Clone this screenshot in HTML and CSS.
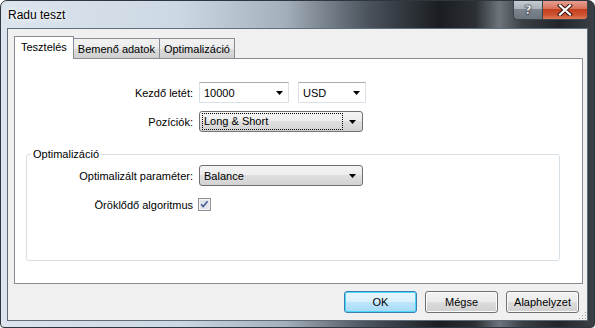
FILE: index.html
```html
<!DOCTYPE html>
<html lang="hu">
<head>
    <meta charset="UTF-8">
    <title>Radu teszt</title>
    <link rel="stylesheet" href="styles.css">
</head>
<body>
    <div class="window">
        <!-- Címsor -->
        <div class="titlebar">
            <span class="title">Radu teszt</span>
            <div class="caption-buttons">
                <div class="cap-btn help"><span>?</span></div>
                <div class="cap-btn close">
                    <svg width="16" height="12" viewBox="0 0 16 12">
                        <path d="M3 1.5 L13 10.5 M13 1.5 L3 10.5" stroke="#3b1b14" stroke-width="4.2" stroke-linecap="square"/>
                        <path d="M3 1.5 L13 10.5 M13 1.5 L3 10.5" stroke="#ffffff" stroke-width="2.2" stroke-linecap="square"/>
                    </svg>
                </div>
            </div>
        </div>

        <div class="client">
            <!-- Fülek -->
            <div class="tabs">
                <div class="tab active">Tesztelés</div>
                <div class="tab">Bemenő adatok</div>
                <div class="tab">Optimalizáció</div>
            </div>

            <div class="panel">
                <div class="form">
                    <label class="field-label">Kezdő letét:</label>
                    <div class="controls">
                        <div class="combo edit deposit">
                            <span>10000</span>
                            <svg class="arrow" width="7" height="4" viewBox="0 0 7 4"><polygon points="0,0 7,0 3.5,4" fill="#000"/></svg>
                        </div>
                        <div class="combo edit currency">
                            <span>USD</span>
                            <svg class="arrow" width="7" height="4" viewBox="0 0 7 4"><polygon points="0,0 7,0 3.5,4" fill="#000"/></svg>
                        </div>
                    </div>

                    <label class="field-label">Pozíciók:</label>
                    <div class="combo list">
                        <span class="focus">Long &amp; Short</span>
                        <svg class="arrow" width="7" height="4" viewBox="0 0 7 4"><polygon points="0,0 7,0 3.5,4" fill="#000"/></svg>
                    </div>
                </div>

                <fieldset class="group">
                    <legend>Optimalizáció</legend>
                    <div class="form group-form">
                        <label class="field-label">Optimalizált paraméter:</label>
                        <div class="combo list">
                            <span>Balance</span>
                            <svg class="arrow" width="7" height="4" viewBox="0 0 7 4"><polygon points="0,0 7,0 3.5,4" fill="#000"/></svg>
                        </div>

                        <label class="field-label">Öröklődő algoritmus</label>
                        <div class="checkbox">
                            <svg width="13" height="13" viewBox="0 0 13 13">
                                <rect x="0.5" y="0.5" width="12" height="12" fill="#f4f4f4" stroke="#8f8f8f"/>
                                <rect x="2" y="2" width="9" height="9" fill="#dfe4ec"/>
                                <path d="M3.2 6.4 L5.2 8.6 L9.6 3.2" fill="none" stroke="#4a5f97" stroke-width="1.6"/>
                            </svg>
                        </div>
                    </div>
                </fieldset>
            </div>

            <!-- Gombok -->
            <div class="buttons">
                <button class="btn default">OK</button>
                <button class="btn">Mégse</button>
                <button class="btn">Alaphelyzet</button>
            </div>

            <div class="grip">
                <svg width="9" height="9" viewBox="0 0 9 9">
                    <rect x="7" y="1" width="1" height="1" fill="#a0a0a0"/>
                    <rect x="4" y="4" width="1" height="1" fill="#a0a0a0"/>
                    <rect x="7" y="4" width="1" height="1" fill="#a0a0a0"/>
                    <rect x="1" y="7" width="1" height="1" fill="#a0a0a0"/>
                    <rect x="4" y="7" width="1" height="1" fill="#a0a0a0"/>
                    <rect x="7" y="7" width="1" height="1" fill="#a0a0a0"/>
                </svg>
            </div>
        </div>
    </div>
</body>
</html>
```

FILE: styles.css
```css
/* Alap beállítások */
* {
    margin: 0;
    padding: 0;
    box-sizing: border-box;
}

body {
    width: 595px;
    height: 328px;
    overflow: hidden;
    background: #ffffff;
    font-family: 'Liberation Sans', Arial, sans-serif;
    font-size: 11px;
    color: #000;
}

/* Ablakkeret (Aero) */
.window {
    width: 595px;
    height: 328px;
    border: 1px solid #30363d;
    border-radius: 7px 7px 4px 4px;
    background: linear-gradient(to right, #dce5ee 0%, #ccd8e4 30%, #a3afbb 48%, #4a525b 62%, #1a1d21 74%, #2c3035 80%, #6d747b 84%, #3a3f45 88%, #22262a 94%, #3b4046 100%);
    display: flex;
    flex-direction: column;
    overflow: hidden;
}

.titlebar {
    height: 27px;
    display: flex;
    align-items: flex-start;
    flex-shrink: 0;
}

.title {
    flex: 1;
    padding: 7px 0 0 7px;
    font-size: 12px;
    color: #000;
    text-shadow: 0 0 6px #ffffff, 0 0 3px #ffffff;
}

.caption-buttons {
    display: flex;
    margin-right: 6px;
    margin-top: -1px;
}

.cap-btn {
    height: 20px;
    display: flex;
    align-items: center;
    justify-content: center;
    border: 1px solid #3c434b;
    border-top: none;
}

.cap-btn.help {
    width: 29px;
    border-radius: 0 0 0 4px;
    border-right: none;
    background: linear-gradient(to bottom, #c9cfd6 0%, #aab2ba 45%, #7c858e 50%, #6d767f 100%);
}

.cap-btn.help span {
    font-family: 'DejaVu Sans', sans-serif;
    font-weight: bold;
    font-size: 13px;
    line-height: 13px;
    color: #ffffff;
    -webkit-text-stroke: 0.4px #2a2f35;
    text-shadow: 0 0 2px #2a2f35;
}

.cap-btn.close {
    width: 46px;
    border-radius: 0 0 4px 0;
    background: linear-gradient(to bottom, #e8a597 0%, #d9735e 45%, #c5401f 50%, #cf5432 80%, #e07d5a 100%);
}

/* Kliens terület */
.client {
    position: relative;
    height: 293px;
    margin: 0 6px;
    border: 1px solid #5f6c79;
    background: #f0f0f0;
    padding: 7px 0 0 0;
    display: flex;
    flex-direction: column;
}

.tabs {
    height: 22px;
    display: flex;
    align-items: flex-end;
    margin-left: 6px;
}

.tab {
    height: 20px;
    padding: 0 4px;
    display: flex;
    align-items: center;
    border: 1px solid #898c95;
    border-bottom: none;
    margin-left: -1px;
    background: linear-gradient(to bottom, #f2f2f2 0%, #ebebeb 50%, #dddddd 50%, #cfcfcf 100%);
}

.tab.active {
    height: 23px;
    margin-left: 0;
    margin-bottom: -1px;
    padding: 0 6px 2px 6px;
    background: #ffffff;
    position: relative;
    z-index: 1;
}

.panel {
    height: 226px;
    margin: 0 4px 0 6px;
    background: #ffffff;
    border: 1px solid #898c95;
    padding-top: 23px;
}

/* Űrlap rács */
.form {
    display: grid;
    grid-template-columns: 178px auto;
    column-gap: 6px;
    row-gap: 8px;
    align-items: center;
    justify-items: start;
}

.field-label {
    justify-self: end;
}

.controls {
    display: flex;
    gap: 9px;
}

.combo {
    height: 21px;
    display: flex;
    align-items: center;
    justify-content: space-between;
    padding: 0 5px 0 4px;
}

.combo.edit {
    background: #ffffff;
    border: 1px solid #dbdfe6;
    border-top-color: #abadb3;
}

.combo.deposit {
    width: 90px;
}

.combo.currency {
    width: 68px;
}

.combo.list {
    width: 164px;
    border: 1px solid #707070;
    border-radius: 3px;
    padding: 0 6px 0 2px;
    background: linear-gradient(to bottom, #f4f4f4 0%, #ececec 50%, #dfdfdf 50%, #d2d2d2 100%);
}

.combo.list span {
    padding-left: 2px;
}

.combo.list .focus {
    width: 141px;
    height: 17px;
    line-height: 15px;
    border: 1px dotted #000;
    padding-left: 1px;
    margin-top: -1px;
}

/* Csoportdoboz */
.group {
    height: 113px;
    margin: 16px 22px 0 11px;
    border: 1px solid #d5dfe5;
    border-radius: 3px;
    padding: 4px 0 0 0;
}

.group legend {
    margin-left: 4px;
    padding: 0 2px;
    line-height: 13px;
}

.group-form {
    grid-template-columns: 166px auto;
    row-gap: 12px;
}

.checkbox {
    height: 13px;
    margin-left: -1px;
}

.checkbox svg {
    display: block;
}

/* Gombok */
.buttons {
    display: flex;
    justify-content: flex-end;
    gap: 8px;
    margin-top: 7px;
    padding-right: 8px;
}

.btn {
    width: 73px;
    height: 22px;
    font-family: 'Liberation Sans', Arial, sans-serif;
    font-size: 11px;
    color: #000;
    border: 1px solid #707070;
    border-radius: 3px;
    background: linear-gradient(to bottom, #f2f2f2 0%, #ebebeb 50%, #dddddd 50%, #cfcfcf 100%);
    box-shadow: inset 0 0 0 1px #fcfcfc;
}

.btn.default {
    border-color: #3c7fb1;
    background: linear-gradient(to bottom, #eaf6fd 0%, #d9f0fc 50%, #bee6fd 50%, #a7d9f5 100%);
    box-shadow: inset 0 0 0 1px #48d8fb;
}

.grip {
    position: absolute;
    right: 0;
    bottom: 0;
    width: 9px;
    height: 9px;
}

.grip svg {
    display: block;
}
```
